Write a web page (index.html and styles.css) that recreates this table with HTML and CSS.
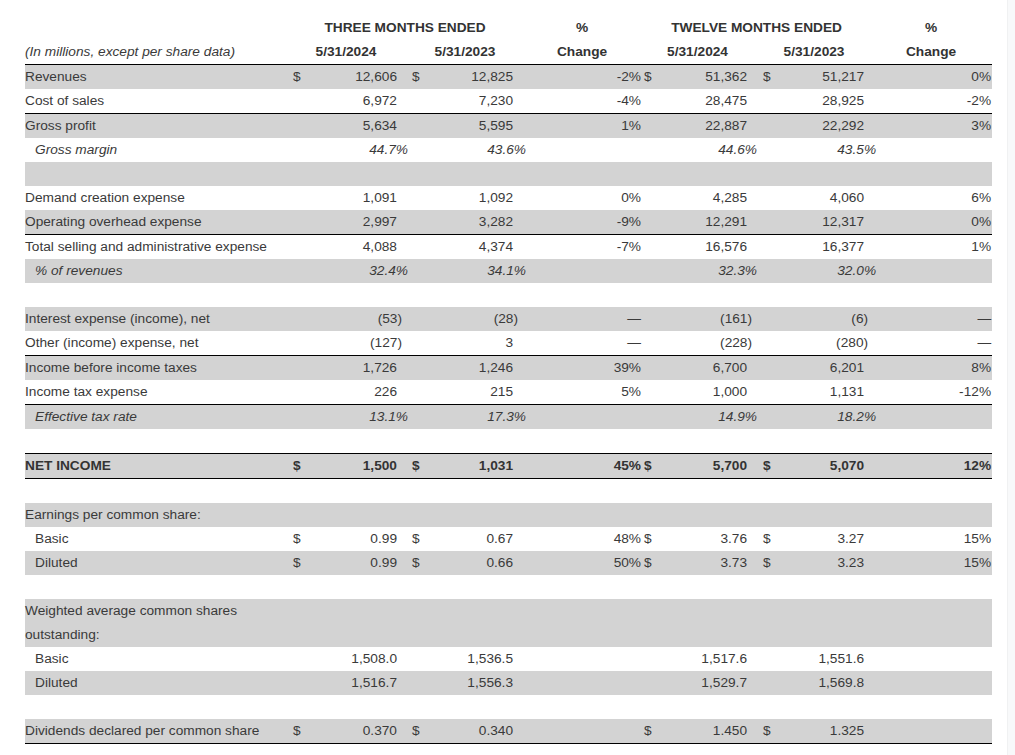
FILE: index.html
```html
<!DOCTYPE html>
<html>
<head>
<meta charset="utf-8">
<link rel="stylesheet" href="styles.css">
</head>
<body>
<div class="page">
  <div class="main">
    <table class="fin">
      <colgroup>
        <col class="c-a"><col class="c-b"><col class="c-c"><col class="c-d"><col class="c-e"><col class="c-f"><col class="c-g"><col class="c-h"><col class="c-i"><col class="c-j"><col class="c-k">
      </colgroup>
      <thead>
        <tr class="h1">
          <th class="lbl"></th>
          <th colspan="4">THREE MONTHS ENDED</th>
          <th>%</th>
          <th colspan="4">TWELVE MONTHS ENDED</th>
          <th>%</th>
        </tr>
        <tr class="h2 bb">
          <th class="lbl note">(In millions, except per share data)</th>
          <th colspan="2">5/31/2024</th>
          <th colspan="2">5/31/2023</th>
          <th>Change</th>
          <th colspan="2">5/31/2024</th>
          <th colspan="2">5/31/2023</th>
          <th>Change</th>
        </tr>
      </thead>
      <tbody>
        <tr class="g">
          <td class="lbl">Revenues</td><td class="d1">$</td><td class="v1">12,606</td><td class="d2">$</td><td class="v2">12,825</td><td class="p1">-2%</td><td class="d3">$</td><td class="v3">51,362</td><td class="d4">$</td><td class="v4">51,217</td><td class="p2">0%</td>
        </tr>
        <tr class="bb">
          <td class="lbl">Cost of sales</td><td class="d1"></td><td class="v1">6,972</td><td class="d2"></td><td class="v2">7,230</td><td class="p1">-4%</td><td class="d3"></td><td class="v3">28,475</td><td class="d4"></td><td class="v4">28,925</td><td class="p2">-2%</td>
        </tr>
        <tr class="g">
          <td class="lbl">Gross profit</td><td class="d1"></td><td class="v1">5,634</td><td class="d2"></td><td class="v2">5,595</td><td class="p1">1%</td><td class="d3"></td><td class="v3">22,887</td><td class="d4"></td><td class="v4">22,292</td><td class="p2">3%</td>
        </tr>
        <tr class="ratio">
          <td class="lbl ind">Gross margin</td><td class="d1"></td><td class="v1">44.7%</td><td class="d2"></td><td class="v2">43.6%</td><td class="p1"></td><td class="d3"></td><td class="v3">44.6%</td><td class="d4"></td><td class="v4">43.5%</td><td class="p2"></td>
        </tr>
        <tr class="g sp"><td colspan="11">&nbsp;</td></tr>
        <tr>
          <td class="lbl">Demand creation expense</td><td class="d1"></td><td class="v1">1,091</td><td class="d2"></td><td class="v2">1,092</td><td class="p1">0%</td><td class="d3"></td><td class="v3">4,285</td><td class="d4"></td><td class="v4">4,060</td><td class="p2">6%</td>
        </tr>
        <tr class="g bb">
          <td class="lbl">Operating overhead expense</td><td class="d1"></td><td class="v1">2,997</td><td class="d2"></td><td class="v2">3,282</td><td class="p1">-9%</td><td class="d3"></td><td class="v3">12,291</td><td class="d4"></td><td class="v4">12,317</td><td class="p2">0%</td>
        </tr>
        <tr>
          <td class="lbl">Total selling and administrative expense</td><td class="d1"></td><td class="v1">4,088</td><td class="d2"></td><td class="v2">4,374</td><td class="p1">-7%</td><td class="d3"></td><td class="v3">16,576</td><td class="d4"></td><td class="v4">16,377</td><td class="p2">1%</td>
        </tr>
        <tr class="g ratio">
          <td class="lbl ind">% of revenues</td><td class="d1"></td><td class="v1">32.4%</td><td class="d2"></td><td class="v2">34.1%</td><td class="p1"></td><td class="d3"></td><td class="v3">32.3%</td><td class="d4"></td><td class="v4">32.0%</td><td class="p2"></td>
        </tr>
        <tr class="sp"><td colspan="11">&nbsp;</td></tr>
        <tr class="g">
          <td class="lbl">Interest expense (income), net</td><td class="d1"></td><td class="v1 neg">(53)</td><td class="d2"></td><td class="v2 neg">(28)</td><td class="p1">—</td><td class="d3"></td><td class="v3 neg">(161)</td><td class="d4"></td><td class="v4 neg">(6)</td><td class="p2">—</td>
        </tr>
        <tr class="bb">
          <td class="lbl">Other (income) expense, net</td><td class="d1"></td><td class="v1 neg">(127)</td><td class="d2"></td><td class="v2">3</td><td class="p1">—</td><td class="d3"></td><td class="v3 neg">(228)</td><td class="d4"></td><td class="v4 neg">(280)</td><td class="p2">—</td>
        </tr>
        <tr class="g">
          <td class="lbl">Income before income taxes</td><td class="d1"></td><td class="v1">1,726</td><td class="d2"></td><td class="v2">1,246</td><td class="p1">39%</td><td class="d3"></td><td class="v3">6,700</td><td class="d4"></td><td class="v4">6,201</td><td class="p2">8%</td>
        </tr>
        <tr class="bb">
          <td class="lbl">Income tax expense</td><td class="d1"></td><td class="v1">226</td><td class="d2"></td><td class="v2">215</td><td class="p1">5%</td><td class="d3"></td><td class="v3">1,000</td><td class="d4"></td><td class="v4">1,131</td><td class="p2">-12%</td>
        </tr>
        <tr class="g ratio">
          <td class="lbl ind">Effective tax rate</td><td class="d1"></td><td class="v1">13.1%</td><td class="d2"></td><td class="v2">17.3%</td><td class="p1"></td><td class="d3"></td><td class="v3">14.9%</td><td class="d4"></td><td class="v4">18.2%</td><td class="p2"></td>
        </tr>
        <tr class="sp bb"><td colspan="11">&nbsp;</td></tr>
        <tr class="g bb total">
          <td class="lbl">NET INCOME</td><td class="d1">$</td><td class="v1">1,500</td><td class="d2">$</td><td class="v2">1,031</td><td class="p1">45%</td><td class="d3">$</td><td class="v3">5,700</td><td class="d4">$</td><td class="v4">5,070</td><td class="p2">12%</td>
        </tr>
        <tr class="sp"><td colspan="11">&nbsp;</td></tr>
        <tr class="g">
          <td class="lbl">Earnings per common share:</td><td colspan="10"></td>
        </tr>
        <tr>
          <td class="lbl ind-n">Basic</td><td class="d1">$</td><td class="v1">0.99</td><td class="d2">$</td><td class="v2">0.67</td><td class="p1">48%</td><td class="d3">$</td><td class="v3">3.76</td><td class="d4">$</td><td class="v4">3.27</td><td class="p2">15%</td>
        </tr>
        <tr class="g">
          <td class="lbl ind-n">Diluted</td><td class="d1">$</td><td class="v1">0.99</td><td class="d2">$</td><td class="v2">0.66</td><td class="p1">50%</td><td class="d3">$</td><td class="v3">3.73</td><td class="d4">$</td><td class="v4">3.23</td><td class="p2">15%</td>
        </tr>
        <tr class="sp"><td colspan="11">&nbsp;</td></tr>
        <tr class="g">
          <td class="lbl">Weighted average common shares outstanding:</td><td colspan="10"></td>
        </tr>
        <tr>
          <td class="lbl ind-n">Basic</td><td class="d1"></td><td class="v1">1,508.0</td><td class="d2"></td><td class="v2">1,536.5</td><td class="p1"></td><td class="d3"></td><td class="v3">1,517.6</td><td class="d4"></td><td class="v4">1,551.6</td><td class="p2"></td>
        </tr>
        <tr class="g">
          <td class="lbl ind-n">Diluted</td><td class="d1"></td><td class="v1">1,516.7</td><td class="d2"></td><td class="v2">1,556.3</td><td class="p1"></td><td class="d3"></td><td class="v3">1,529.7</td><td class="d4"></td><td class="v4">1,569.8</td><td class="p2"></td>
        </tr>
        <tr class="sp"><td colspan="11">&nbsp;</td></tr>
        <tr class="g bb">
          <td class="lbl">Dividends declared per common share</td><td class="d1">$</td><td class="v1">0.370</td><td class="d2">$</td><td class="v2">0.340</td><td class="p1"></td><td class="d3">$</td><td class="v3">1.450</td><td class="d4">$</td><td class="v4">1.325</td><td class="p2"></td>
        </tr>
      </tbody>
    </table>
  </div>
  <div class="edge"></div>
</div>
</body>
</html>
```
FILE: styles.css
```css
html, body {
  margin: 0;
  padding: 0;
  background: #fff;
}

.page {
  display: flex;
  width: 1015px;
  height: 755px;
  overflow: hidden;
}

.main {
  flex: 1;
  padding: 16px 0 0 25px;
}

.edge {
  width: 7px;
  background: #f8f9fa;
  border-left: 1px solid #f0f1f2;
}

.fin {
  table-layout: fixed;
  width: 967px;
  border-collapse: separate;
  border-spacing: 0;
  font-family: "Liberation Sans", Arial, sans-serif;
  font-size: 13.7px;
  color: #3a3a3a;
}

.c-a { width: 264px; }
.c-b { width: 16px; }
.c-c { width: 104px; }
.c-d { width: 15px; }
.c-e { width: 103px; }
.c-f { width: 116px; }
.c-g { width: 15px; }
.c-h { width: 100px; }
.c-i { width: 15px; }
.c-j { width: 103px; }
.c-k { width: 116px; }

.fin th,
.fin td {
  padding: 0;
  line-height: 24px;
  vertical-align: middle;
  white-space: nowrap;
}

.fin th {
  font-weight: bold;
  text-align: center;
  padding-right: 6px;
  color: #333;
}

.fin th.lbl {
  text-align: left;
  padding-right: 0;
}

.fin th.note {
  font-weight: normal;
  font-style: italic;
  color: #3a3a3a;
}

.fin td.lbl {
  text-align: left;
  white-space: normal;
}

.fin td.ind {
  padding-left: 10px;
  font-style: italic;
}

.fin td.ind-n {
  padding-left: 10px;
}

.g td {
  background: #d3d3d3;
}

.bb th,
.bb td {
  border-bottom: 1px solid #000;
}

.total td {
  font-weight: bold;
  color: #333;
}

.d1, .d2, .d3, .d4 {
  text-align: left;
}
.d1 { padding-left: 4px !important; }
.d2 { padding-left: 3px !important; }
.d3 { padding-left: 1px !important; }
.d4 { padding-left: 5px !important; }

.v1, .v2, .v3, .v4, .p1, .p2 {
  text-align: right;
}
.v1 { padding-right: 12px !important; }
.v2 { padding-right: 14px !important; }
.v3 { padding-right: 11px !important; }
.v4 { padding-right: 12px !important; }
.p1 { padding-right: 2px !important; }
.p2 { padding-right: 1px !important; }

.v1.neg { padding-right: 7px !important; }
.v2.neg { padding-right: 9px !important; }
.v3.neg { padding-right: 6px !important; }
.v4.neg { padding-right: 8px !important; }

.ratio .v1,
.ratio .v2,
.ratio .v3,
.ratio .v4 {
  font-style: italic;
  padding-right: 1px !important;
}
.ratio .v4 { padding-right: 0 !important; }
```
